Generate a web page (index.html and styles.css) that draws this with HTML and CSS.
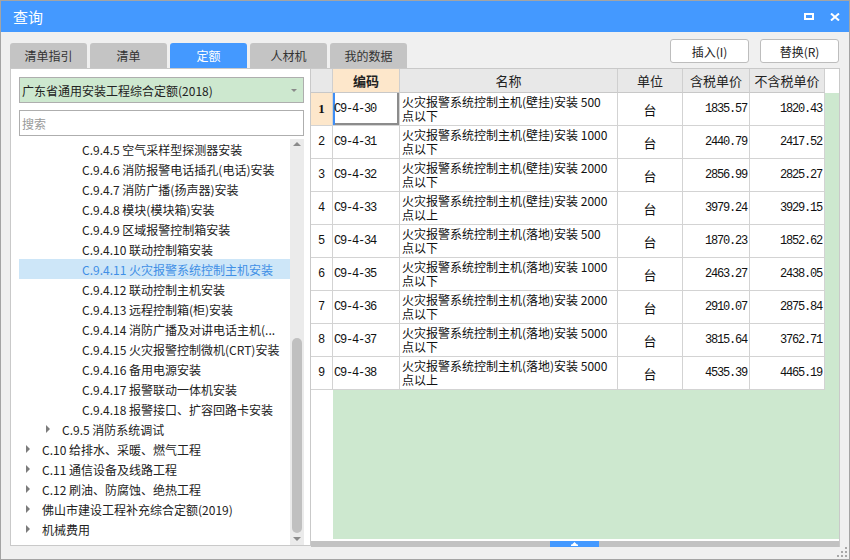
FILE: index.html
```html
<!DOCTYPE html>
<html lang="zh-CN">
<head>
<meta charset="utf-8">
<title>查询</title>
<link rel="stylesheet" href="styles.css">
</head>
<body>
<div class="window">
  <div class="titlebar">
    <div class="title">查询</div>
    <div class="winbtns">
      <svg width="10" height="7" viewBox="0 0 10 7"><rect x="1" y="1" width="8" height="5" fill="none" stroke="#fff" stroke-width="2"/></svg>
      <svg width="10" height="8" viewBox="0 0 10 8"><path d="M1 0.5 L9 7.5 M9 0.5 L1 7.5" stroke="#fff" stroke-width="2" fill="none"/></svg>
    </div>
  </div>
  <div class="top">
    <div class="tabs">
      <div class="tab">清单指引</div>
      <div class="tab">清单</div>
      <div class="tab active">定额</div>
      <div class="tab">人材机</div>
      <div class="tab">我的数据</div>
    </div>
    <div class="btns">
      <div class="btn">插入(I)</div>
      <div class="btn">替换(R)</div>
    </div>
  </div>
  <div class="content">
    <div class="left">
      <div class="select"><span>广东省通用安装工程综合定额(2018)</span><span class="sel-arrow"></span></div>
      <div class="search">搜索</div>
      <div class="treewrap">
        <div class="tree">
          <div class="node l3"><span class="tw"></span>C.9.4.5 空气采样型探测器安装</div>
          <div class="node l3"><span class="tw"></span>C.9.4.6 消防报警电话插孔(电话)安装</div>
          <div class="node l3"><span class="tw"></span>C.9.4.7 消防广播(扬声器)安装</div>
          <div class="node l3"><span class="tw"></span>C.9.4.8 模块(模块箱)安装</div>
          <div class="node l3"><span class="tw"></span>C.9.4.9 区域报警控制箱安装</div>
          <div class="node l3"><span class="tw"></span>C.9.4.10 联动控制箱安装</div>
          <div class="node l3 sel"><span class="tw"></span>C.9.4.11 火灾报警系统控制主机安装</div>
          <div class="node l3"><span class="tw"></span>C.9.4.12 联动控制主机安装</div>
          <div class="node l3"><span class="tw"></span>C.9.4.13 远程控制箱(柜)安装</div>
          <div class="node l3"><span class="tw"></span>C.9.4.14 消防广播及对讲电话主机(...</div>
          <div class="node l3"><span class="tw"></span>C.9.4.15 火灾报警控制微机(CRT)安装</div>
          <div class="node l3"><span class="tw"></span>C.9.4.16 备用电源安装</div>
          <div class="node l3"><span class="tw"></span>C.9.4.17 报警联动一体机安装</div>
          <div class="node l3"><span class="tw"></span>C.9.4.18 报警接口、扩容回路卡安装</div>
          <div class="node l2"><span class="tw"><i class="tri"></i></span>C.9.5 消防系统调试</div>
          <div class="node l1"><span class="tw"><i class="tri"></i></span>C.10 给排水、采暖、燃气工程</div>
          <div class="node l1"><span class="tw"><i class="tri"></i></span>C.11 通信设备及线路工程</div>
          <div class="node l1"><span class="tw"><i class="tri"></i></span>C.12 刷油、防腐蚀、绝热工程</div>
          <div class="node l1"><span class="tw"><i class="tri"></i></span>佛山市建设工程补充综合定额(2019)</div>
          <div class="node l1"><span class="tw"><i class="tri"></i></span>机械费用</div>
        </div>
        <div class="vscroll">
          <div class="sb-btn"><i class="sb-up"></i></div>
          <div class="sb-track"><div class="sb-thumb"></div></div>
          <div class="sb-btn"><i class="sb-down"></i></div>
        </div>
      </div>
    </div>
    <div class="grid">
      <div class="thead">
        <div class="hc"></div>
        <div class="hc code-h">编码</div>
        <div class="hc">名称</div>
        <div class="hc">单位</div>
        <div class="hc">含税单价</div>
        <div class="hc">不含税单价</div>
        <div class="hc blank"></div>
      </div>
      <div class="row">
        <div class="c rn cur">1</div><div class="c code focus">C9-4-30</div><div class="c name">火灾报警系统控制主机(壁挂)安装 500<br>点以下</div><div class="c unit">台</div><div class="c num">1835.57</div><div class="c num">1820.43</div><div class="c fillc"></div>
      </div>
      <div class="row">
        <div class="c rn">2</div><div class="c code">C9-4-31</div><div class="c name">火灾报警系统控制主机(壁挂)安装 1000<br>点以下</div><div class="c unit">台</div><div class="c num">2440.79</div><div class="c num">2417.52</div><div class="c fillc"></div>
      </div>
      <div class="row">
        <div class="c rn">3</div><div class="c code">C9-4-32</div><div class="c name">火灾报警系统控制主机(壁挂)安装 2000<br>点以下</div><div class="c unit">台</div><div class="c num">2856.99</div><div class="c num">2825.27</div><div class="c fillc"></div>
      </div>
      <div class="row">
        <div class="c rn">4</div><div class="c code">C9-4-33</div><div class="c name">火灾报警系统控制主机(壁挂)安装 2000<br>点以上</div><div class="c unit">台</div><div class="c num">3979.24</div><div class="c num">3929.15</div><div class="c fillc"></div>
      </div>
      <div class="row">
        <div class="c rn">5</div><div class="c code">C9-4-34</div><div class="c name">火灾报警系统控制主机(落地)安装 500<br>点以下</div><div class="c unit">台</div><div class="c num">1870.23</div><div class="c num">1852.62</div><div class="c fillc"></div>
      </div>
      <div class="row">
        <div class="c rn">6</div><div class="c code">C9-4-35</div><div class="c name">火灾报警系统控制主机(落地)安装 1000<br>点以下</div><div class="c unit">台</div><div class="c num">2463.27</div><div class="c num">2438.05</div><div class="c fillc"></div>
      </div>
      <div class="row">
        <div class="c rn">7</div><div class="c code">C9-4-36</div><div class="c name">火灾报警系统控制主机(落地)安装 2000<br>点以下</div><div class="c unit">台</div><div class="c num">2910.07</div><div class="c num">2875.84</div><div class="c fillc"></div>
      </div>
      <div class="row">
        <div class="c rn">8</div><div class="c code">C9-4-37</div><div class="c name">火灾报警系统控制主机(落地)安装 5000<br>点以下</div><div class="c unit">台</div><div class="c num">3815.64</div><div class="c num">3762.71</div><div class="c fillc"></div>
      </div>
      <div class="row">
        <div class="c rn">9</div><div class="c code">C9-4-38</div><div class="c name">火灾报警系统控制主机(落地)安装 5000<br>点以上</div><div class="c unit">台</div><div class="c num">4535.39</div><div class="c num">4465.19</div><div class="c fillc"></div>
      </div>
      <div class="filler"><div class="filler-rn"></div><div class="filler-green"></div></div>
      <div class="hgap"></div>
      <div class="hscroll">
        <div class="hthumb"><svg width="7" height="4" viewBox="0 0 7 4"><path d="M3.5 0 L6 2.5 L1 2.5 Z M0 2.5 H7 V4 H0 Z" fill="#fff"/></svg></div>
      </div>
    </div>
  </div>
  <div class="bottom">
    <svg class="grip" width="11" height="11" viewBox="0 0 11 11" fill="#a8a8a8">
      <rect x="8" y="0" width="2" height="2"/>
      <rect x="4" y="4" width="2" height="2"/><rect x="8" y="4" width="2" height="2"/>
      <rect x="0" y="8" width="2" height="2"/><rect x="4" y="8" width="2" height="2"/><rect x="8" y="8" width="2" height="2"/>
    </svg>
  </div>
</div>
</body>
</html>
```

FILE: styles.css
```css
html, body {
  margin: 0;
  padding: 0;
}
body {
  width: 850px;
  height: 560px;
  overflow: hidden;
  font-family: "Noto Sans CJK SC", "Noto Sans", sans-serif;
  color: #222;
}
.window {
  box-sizing: border-box;
  width: 850px;
  height: 560px;
  border: 1px solid #a4a4a4;
  background: #f0f0f0;
  display: flex;
  flex-direction: column;
}
.titlebar {
  height: 31px;
  flex: none;
  background: #4499ff;
  color: #fff;
  font-size: 15px;
  display: flex;
  align-items: center;
  padding: 0 9px 0 12px;
}
.title {
  flex: 1;
}
.winbtns {
  display: flex;
  align-items: center;
  gap: 16px;
}
.winbtns svg {
  display: block;
}
.top {
  height: 36px;
  flex: none;
  display: flex;
  padding: 0 9px;
}
.tabs {
  display: flex;
  gap: 3px;
  align-self: flex-end;
}
.tab {
  width: 77px;
  height: 25px;
  background: #c4c4c4;
  border-radius: 3px 3px 0 0;
  font-size: 12px;
  color: #333;
  display: flex;
  align-items: center;
  justify-content: center;
}
.tab.active {
  background: #4499ff;
  color: #fff;
}
.btns {
  margin-left: auto;
  margin-top: 7px;
  margin-right: 1px;
  display: flex;
  gap: 11px;
}
.btn {
  box-sizing: border-box;
  width: 79px;
  height: 24px;
  background: #fff;
  border: 1px solid #bdbdbd;
  border-radius: 3px;
  font-size: 12px;
  color: #222;
  display: flex;
  align-items: center;
  justify-content: center;
}
.content {
  height: 479px;
  flex: none;
  display: flex;
  padding: 0 9px;
}
.left {
  box-sizing: border-box;
  width: 301px;
  height: 478px;
  border: 1px solid #c9c9c9;
  background: #fff;
  padding: 8px 0 0 8px;
  display: flex;
  flex-direction: column;
}
.select {
  box-sizing: border-box;
  width: 285px;
  height: 26px;
  flex: none;
  border: 1px solid #aeaeae;
  background: #cde8cf;
  font-size: 12px;
  color: #222;
  padding-left: 2px;
  display: flex;
  align-items: center;
}
.sel-arrow {
  margin-left: auto;
  margin-right: 6px;
  width: 0;
  height: 0;
  border-left: 3px solid transparent;
  border-right: 3px solid transparent;
  border-top: 3px solid #8a8a8a;
}
.search {
  box-sizing: border-box;
  width: 285px;
  height: 26px;
  flex: none;
  margin-top: 7px;
  border: 1px solid #aeaeae;
  background: #fff;
  font-size: 12px;
  color: #9a9a9a;
  padding-left: 2px;
  display: flex;
  align-items: center;
}
.treewrap {
  margin-top: 3px;
  flex: 1;
  display: flex;
  min-height: 0;
}
.tree {
  width: 271px;
  flex: none;
}
.node {
  height: 20px;
  display: flex;
  align-items: center;
  font-size: 12px;
  color: #222;
  white-space: nowrap;
  overflow: hidden;
}
.node.l1 { padding-left: 0; }
.node.l2 { padding-left: 20px; }
.node.l3 { padding-left: 40px; }
.node.sel {
  background: #cde6f8;
  color: #3f8fe6;
}
.tw {
  width: 23px;
  flex: none;
  display: flex;
  align-items: center;
}
.tri {
  display: block;
  margin-left: 7px;
  width: 0;
  height: 0;
  border-left: 4px solid #7c7c7c;
  border-top: 4px solid transparent;
  border-bottom: 4px solid transparent;
}
.vscroll {
  width: 14px;
  flex: none;
  background: #ebebeb;
  display: flex;
  flex-direction: column;
}
.sb-btn {
  height: 12px;
  flex: none;
  display: flex;
  justify-content: center;
}
.sb-btn:first-child {
  align-items: flex-start;
  padding-top: 3px;
  height: 9px;
}
.sb-btn:last-child {
  align-items: center;
}
.sb-up {
  display: block;
  width: 0;
  height: 0;
  border-left: 4px solid transparent;
  border-right: 4px solid transparent;
  border-bottom: 4px solid #8a8a8a;
}
.sb-down {
  display: block;
  width: 0;
  height: 0;
  border-left: 4px solid transparent;
  border-right: 4px solid transparent;
  border-top: 4px solid #8a8a8a;
}
.sb-track {
  flex: 1;
  display: flex;
  flex-direction: column;
  justify-content: flex-end;
  align-items: center;
}
.sb-thumb {
  width: 10px;
  height: 195px;
  background: #c0c0c0;
  border-radius: 5px;
}
.grid {
  flex: 1;
  box-sizing: border-box;
  height: 479px;
  border-top: 1px solid #c9c9c9;
  border-right: 1px solid #c9c9c9;
  background: #fff;
  display: flex;
  flex-direction: column;
}
.thead,
.row {
  display: grid;
  grid-template-columns: 22px 67px 218px 65px 67px 75px 1fr;
  flex: none;
}
.thead {
  height: 24px;
}
.hc {
  box-sizing: border-box;
  background: #e8e8e8;
  border-right: 1px solid #cfcfcf;
  border-bottom: 1px solid #c8c8c8;
  font-size: 13px;
  color: #222;
  display: flex;
  align-items: center;
  justify-content: center;
}
.hc.code-h {
  background: #fde7cb;
  font-weight: bold;
}
.hc.blank {
  background: #fff;
  border-right: none;
  border-bottom: none;
}
.row {
  height: 33px;
}
.c {
  box-sizing: border-box;
  border-right: 1px solid #d3d3d3;
  border-bottom: 1px solid #d3d3d3;
  background: #fff;
  display: flex;
  align-items: center;
  font-size: 12px;
  color: #111;
  white-space: nowrap;
  overflow: hidden;
}
.c.rn {
  justify-content: center;
  font-family: "Liberation Mono", monospace;
  font-size: 12px;
}
.c.rn.cur {
  background: #fde7cb;
  font-family: "Liberation Serif", serif;
  font-weight: bold;
  font-size: 13px;
}
.c.code {
  padding-left: 1px;
  font-family: "Liberation Mono", monospace;
  letter-spacing: -1.2px;
}
.c.code.focus {
  box-shadow: inset 2px 0 0 #3f8ef5, inset -2px -2px 0 #8c8c8c;
}
.c.name {
  padding-left: 2px;
  line-height: 14px;
}
.c.unit {
  justify-content: center;
  font-size: 13px;
}
.c.num {
  justify-content: flex-end;
  padding-right: 2px;
  font-family: "Liberation Mono", monospace;
  letter-spacing: -1.2px;
}
.c.fillc {
  background: #cde8cf;
  border: none;
}
.filler {
  flex: 1;
  display: flex;
}
.filler-rn {
  width: 22px;
  background: #fff;
}
.filler-green {
  flex: 1;
  background: #cde8cf;
}
.hgap {
  height: 2px;
  flex: none;
  background: #fff;
}
.hscroll {
  height: 6px;
  flex: none;
  background: #c2c2c2;
  display: flex;
}
.hthumb {
  margin-left: 239px;
  width: 49px;
  height: 6px;
  background: #4499ff;
  display: flex;
  align-items: flex-end;
  justify-content: center;
}
.hthumb svg {
  display: block;
  margin-bottom: 1px;
}
.bottom {
  flex: 1;
  display: flex;
  justify-content: flex-end;
  align-items: flex-end;
  padding: 0 1px 1px 0;
}
.grip {
  display: block;
}
```
